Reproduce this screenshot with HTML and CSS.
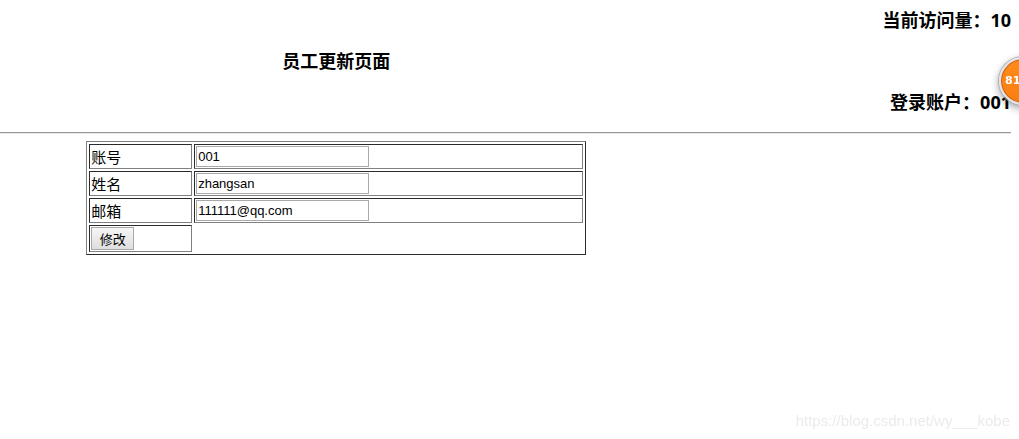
FILE: index.html
```
<!DOCTYPE html>
<html lang="zh-CN">
<head>
  <meta charset="UTF-8">
  <meta name="viewport" content="width=device-width, initial-scale=1.0">
  <title>员工更新页面</title>
  <link rel="stylesheet" href="styles.css">
</head>
<body>
  <h3 class="right">当前访问量：10</h3>
  <h3 class="title">员工更新页面</h3>
  <h3 class="right">登录账户：001</h3>
  <hr>

  <form class="content">
    <table class="employee">
      <tr>
        <td class="name"><label for="account">账号</label></td>
        <td><input type="text" id="account" name="account" value="001"></td>
      </tr>
      <tr>
        <td class="name"><label for="username">姓名</label></td>
        <td><input type="text" id="username" name="username" value="zhangsan"></td>
      </tr>
      <tr>
        <td class="name"><label for="email">邮箱</label></td>
        <td><input type="text" id="email" name="email" value="111111@qq.com"></td>
      </tr>
      <tr>
        <td class="name"><button type="submit">修改</button></td>
      </tr>
    </table>
  </form>

  <!-- Floating score ball, half off the right edge -->
  <div class="ball">81</div>
  <div class="watermark">https://blog.csdn.net/wy___kobe</div>
</body>
</html>
```
FILE: styles.css
```
body {
  margin: 8px 8px 0 0;
  background: #fff;
  color: #000;
  font-family: "Open Sans", "Noto Sans CJK SC", sans-serif;
  overflow: hidden;
}

h3 {
  margin: 0 0 17px;
  font-size: 18px;
  line-height: 24px;
}

.right {
  text-align: right;
}

.title {
  width: 66.5%;
  text-align: center;
}

hr {
  margin: 18px 0 7px;
  border: 0;
  border-top: 1px solid #999;
  border-bottom: 1px solid #e8e8e8;
}

.content {
  width: 66.5%;
}

.employee {
  width: 500px;
  margin: 0 auto;
  border: 1px solid;
  border-color: #808080 #2b2b2b #2b2b2b #808080;
  border-spacing: 2px;
}

.employee td {
  padding: 1px;
  border: 1px solid;
  border-color: #2b2b2b #808080 #808080 #2b2b2b;
  font-size: 15px;
  line-height: 20px;
}

.employee .name {
  width: 99px;
}

input {
  display: block;
  box-sizing: border-box;
  width: 173px;
  height: 21px;
  padding: 1px;
  border: 1px solid #a9a9a9;
  background: #fff;
  color: #000;
  font: 13px "Liberation Sans", sans-serif;
}

button {
  display: block;
  box-sizing: border-box;
  width: 43px;
  height: 23px;
  padding: 0;
  border: 1px solid #a9a9a9;
  background: linear-gradient(#f6f6f6, #dedede);
  color: #000;
  font: 13px/20px "Noto Sans CJK SC", sans-serif;
}

.ball {
  position: fixed;
  top: 57px;
  right: -28px;
  box-sizing: border-box;
  width: 48px;
  height: 48px;
  padding-left: 4px;
  border: 2px solid #e4e4ea;
  border-radius: 50%;
  background: linear-gradient(#ff8a1c, #f97f10);
  box-shadow: inset 0 0 0 1px #c4621c, 0 0 1px 1px #aaa, 0 3px 8px rgba(0, 0, 0, 0.4);
  color: #fff;
  font: bold 11px/44px "DejaVu Sans", sans-serif;
}

.watermark {
  position: fixed;
  right: 9px;
  bottom: 8px;
  color: #ebebeb;
  font: 15px/20px "Liberation Sans", sans-serif;
}
```
